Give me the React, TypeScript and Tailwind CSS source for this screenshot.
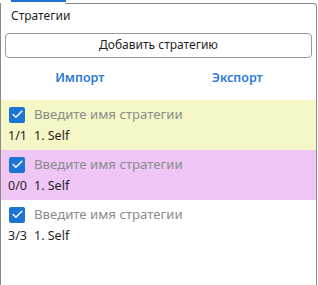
import { Check } from "lucide-react";

const rows = [
    { bg: "bg-[#f5f7c6]", count: "1/1" },
    { bg: "bg-[#efc6f5]", count: "0/0" },
    { bg: "bg-white", count: "3/3" },
];

function StrategyRow({ bg, count }: { bg: string; count: string }) {
    return (
        <div className={`h-[50px] ${bg} flex flex-col pl-[7px] pt-[7px]`}>
            <div className="flex items-center h-[16px]">
                <div className="w-[16px] h-[16px] ml-px bg-[#1c74d4] rounded-[2px] flex items-center justify-center">
                    <Check className="w-[13px] h-[13px] text-white" strokeWidth={2.75} />
                </div>
                <span className="ml-[9px] text-[13.2px] text-[#8c8c8c] leading-none">Введите имя стратегии</span>
            </div>
            <div className="flex items-center mt-[6px] text-[12.5px] text-[#1f1f1f] leading-none h-[16px]">
                <span className="w-[26px]">{count}</span>
                <span>1. Self</span>
            </div>
        </div>
    );
}

export default function App() {
    return (
        <div className="w-[317px] h-[285px] flex flex-col bg-white font-['Noto_Sans',sans-serif]">
            <div className="flex h-[26px] shrink-0">
                <div className="w-[65px] border-l border-[#8a8a8a] relative pl-[10px] pt-[4px] text-[12px] text-[#1f1f1f] mt-[3px]">
                    <div className="absolute left-[10px] top-[-3px] w-[55px] h-[2px] bg-[#1c74d4]" />
                    Стратегии
                </div>
                <div className="flex-1 mt-[3px] border-t border-r border-[#8a8a8a] rounded-tr-[4px]" />
            </div>
            <div className="flex-1 border-l border-r border-[#8a8a8a] flex flex-col">
                <div className="px-[4px] pt-[5px]">
                    <button className="w-full h-[25px] rounded-[4px] border border-[#9a9a9a] bg-white text-[12px] text-[#1f1f1f]">
                        Добавить стратегию
                    </button>
                </div>
                <div className="grid grid-cols-2 h-[42px] items-center text-[12.5px] font-semibold text-[#2a7bd4]">
                    <span className="text-center">Импорт</span>
                    <span className="text-center">Экспорт</span>
                </div>
                {rows.map((r) => (
                    <StrategyRow key={r.count} bg={r.bg} count={r.count} />
                ))}
            </div>
        </div>
    );
}
